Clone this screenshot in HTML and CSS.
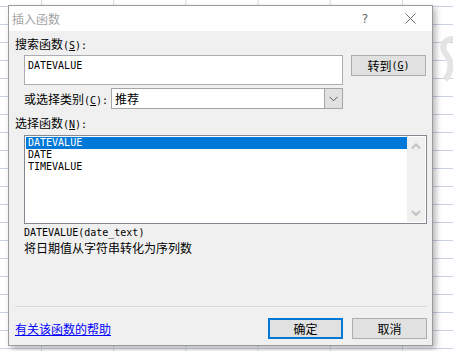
FILE: index.html
```html
<!DOCTYPE html>
<html lang="zh-CN">
<head>
<meta charset="utf-8">
<title>插入函数</title>
<link rel="stylesheet" href="styles.css">
</head>
<body>
<div class="desk">
  <svg class="mark" width="17" height="50" viewBox="0 0 17 50"><path d="M16 3 C6 3 4 12 9 18 C14 24 16 34 8 44" fill="none" stroke="#e4e4e4" stroke-width="6"/></svg>
  <div class="dialog">
    <div class="titlebar">
      <span class="title">插入函数</span>
      <span class="help">?</span>
      <span class="close"><svg width="11" height="11" viewBox="0 0 11 11"><path d="M0.5 0.5L10.5 10.5M10.5 0.5L0.5 10.5" stroke="#6f6f6f" stroke-width="1" fill="none"/></svg></span>
    </div>
    <div class="body">
      <div class="label first">搜索函数<span class="m">(<u>S</u>):</span></div>
      <div class="search-row">
        <div class="textbox"><span class="m">DATEVALUE</span></div>
        <div class="btn go">转到<span class="m">(<u>G</u>)</span></div>
      </div>
      <div class="cat-row">
        <div class="label cat-label">或选择类别<span class="m">(<u>C</u>):</span></div>
        <div class="select">
          <span class="sel-text">推荐</span>
          <span class="drop"><svg width="9" height="6" viewBox="0 0 9 6"><path d="M0.5 0.8L4.5 4.8L8.5 0.8" fill="none" stroke="#555" stroke-width="1"/></svg></span>
        </div>
      </div>
      <div class="label second">选择函数<span class="m">(<u>N</u>):</span></div>
      <div class="listbox">
        <ul class="items">
          <li class="selected">DATEVALUE</li>
          <li>DATE</li>
          <li>TIMEVALUE</li>
        </ul>
        <div class="scrollbar">
          <svg width="18" height="18" viewBox="0 0 18 18"><path d="M5 11.5L9 7.5L13 11.5" fill="none" stroke="#c2c2c2" stroke-width="2"/></svg>
          <svg width="18" height="18" viewBox="0 0 18 18"><path d="M5 7L9 11L13 7" fill="none" stroke="#c2c2c2" stroke-width="2"/></svg>
        </div>
      </div>
      <div class="sig m">DATEVALUE(date_text)</div>
      <div class="desc">将日期值从字符串转化为序列数</div>
      <div class="sep"></div>
      <div class="footer">
        <a class="link" href="#">有关该函数的帮助</a>
        <div class="btn ok">确定</div>
        <div class="btn cancel">取消</div>
      </div>
    </div>
  </div>
</div>
</body>
</html>
```
FILE: styles.css
```css
html, body {
  margin: 0;
  padding: 0;
}
body {
  width: 453px;
  height: 351px;
  overflow: hidden;
  background-color: #fff;
  background-image:
    linear-gradient(to bottom, #c9d1e2 1px, transparent 1px),
    linear-gradient(to right, #d3d8e2 1px, transparent 1px);
  background-size: 100% 18px, 72.2px 100%;
  background-position: 0 6px, 41px 0;
  font-family: "Noto Sans CJK SC", "Noto Sans", sans-serif;
  font-size: 12px;
  color: #000;
}
.desk {
  position: relative;
  box-sizing: border-box;
  height: 351px;
  padding: 5px 0 0 8px;
}
.mark {
  position: absolute;
  left: 437px;
  top: 36px;
}
.dialog {
  position: relative;
  width: 425px;
  height: 341px;
  box-sizing: border-box;
  border: 1px solid #9b9b9b;
  background: #f0f0f0;
  box-shadow: 3px 3px 6px rgba(0, 0, 0, 0.28);
  display: flex;
  flex-direction: column;
}
.titlebar {
  flex: none;
  height: 25px;
  background: #fff;
  display: flex;
  align-items: center;
  padding-left: 3px;
  padding-right: 16px;
}
.title {
  flex: 1;
  color: #a3a3a3;
  line-height: 16px;
}
.help {
  width: 12px;
  text-align: center;
  color: #6a6a6a;
  font-family: "DejaVu Sans", sans-serif;
  font-size: 12px;
  line-height: 16px;
  margin-right: 34px;
}
.close {
  display: flex;
  width: 11px;
  height: 11px;
}
.body {
  flex: 1;
  display: flex;
  flex-direction: column;
  padding: 5px 5px 6px 6px;
}
.m {
  font-family: "DejaVu Sans Mono", "Liberation Mono", monospace;
  font-size: 10px;
}
.label {
  line-height: 16px;
  height: 16px;
  white-space: nowrap;
}
.search-row {
  display: flex;
  align-items: flex-start;
  margin-top: 3px;
}
.textbox {
  margin-left: 9px;
  width: 319px;
  height: 30px;
  box-sizing: border-box;
  border: 1px solid #abadb3;
  background: #fff;
  padding: 1px 3px;
  line-height: 14px;
}
.btn {
  width: 75px;
  height: 21px;
  box-sizing: border-box;
  border: 1px solid #adadad;
  background: #e1e1e1;
  display: flex;
  align-items: center;
  justify-content: center;
  line-height: 16px;
  white-space: nowrap;
}
.go {
  margin-left: 8px;
}
.cat-row {
  display: flex;
  align-items: center;
  margin-top: 3px;
  margin-left: 9px;
}
.cat-label {
  width: 87px;
}
.select {
  width: 232px;
  height: 21px;
  box-sizing: border-box;
  border: 1px solid #a6a6a6;
  background: #fff;
  display: flex;
}
.sel-text {
  flex: 1;
  padding-left: 3px;
  line-height: 19px;
}
.drop {
  width: 17px;
  background: #e1e1e1;
  border-left: 1px solid #a6a6a6;
  display: flex;
  align-items: center;
  justify-content: center;
}
.second {
  margin-top: 6px;
}
.listbox {
  margin-top: 4px;
  margin-left: 9px;
  width: 403px;
  height: 89px;
  box-sizing: border-box;
  border: 1px solid #828790;
  background: #fff;
  padding: 1px;
  display: flex;
}
.items {
  list-style: none;
  margin: 0;
  padding: 0;
  flex: 1;
}
.items li {
  height: 12px;
  line-height: 12px;
  padding-left: 2px;
  font-family: "DejaVu Sans Mono", "Liberation Mono", monospace;
  font-size: 10px;
}
.items li.selected {
  background: #0078d7;
  color: #fff;
}
.scrollbar {
  width: 18px;
  background: #f0f0f0;
  display: flex;
  flex-direction: column;
  justify-content: space-between;
}
.scrollbar svg {
  display: block;
}
.sig {
  margin-top: 1px;
  margin-left: 9px;
  line-height: 15px;
}
.desc {
  margin-left: 9px;
  line-height: 15px;
}
.sep {
  margin-top: auto;
  height: 1px;
  background: #dadada;
}
.footer {
  display: flex;
  align-items: center;
  margin-top: 11px;
  height: 21px;
}
.link {
  flex: 1;
  color: #0000ff;
  text-decoration: underline;
  line-height: 16px;
}
.ok {
  border: 2px solid #0078d7;
  margin-right: 9px;
}
```
